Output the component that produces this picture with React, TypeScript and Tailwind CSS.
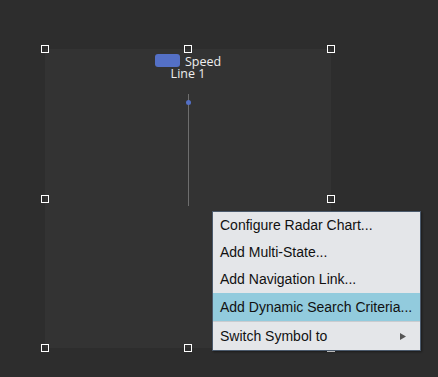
import React from 'react';

const Handle = ({ className }: { className: string }) => (
  <div className={`absolute w-2 h-2 border border-white bg-transparent ${className}`} />
);

const menuItems = [
  { label: 'Configure Radar Chart...', h: 'h-[27px]' },
  { label: 'Add Multi-State...', h: 'h-[27px]' },
  { label: 'Add Navigation Link...', h: 'h-[27px]' },
];

const App: React.FC = () => {
  return (
    <div className="relative w-[438px] h-[377px] bg-[#2d2d2d] overflow-hidden font-['Liberation_Sans',Arial,sans-serif]">
      {/* Widget on canvas */}
      <div className="absolute left-[45px] top-[49px] w-[286px] h-[299px] bg-[#333333]">
        <div className="flex flex-col items-center pt-[5px] font-['Open_Sans','Noto_Sans',sans-serif] text-[12.5px] leading-[12px] text-[#eeeeee]">
          <div className="flex items-center gap-[5px] h-[13px]">
            <div className="w-[25px] h-[13px] rounded-[3px] bg-[#5470c6]" />
            <span className="pt-[2px]">Speed</span>
          </div>
          <span className="pt-[1px]">Line 1</span>
          <div className="relative mt-[14px] w-px h-[112px] bg-[#6e6e6e]">
            <div className="absolute left-[-2px] top-[6px] w-[5px] h-[5px] rounded-full bg-[#5470c6]" />
          </div>
        </div>

        <Handle className="left-[-4px] top-[-4px]" />
        <Handle className="left-[139px] top-[-4px]" />
        <Handle className="left-[282px] top-[-4px]" />
        <Handle className="left-[-4px] top-[146px]" />
        <Handle className="left-[282px] top-[146px]" />
        <Handle className="left-[-4px] top-[295px]" />
        <Handle className="left-[139px] top-[295px]" />
        <Handle className="left-[282px] top-[295px]" />
      </div>

      {/* Context menu */}
      <div className="absolute left-[212px] top-[211px] w-[209px] flex flex-col bg-[#e4e6e9] border border-[#4b5a6c] shadow-[1px_1px_2px_rgba(0,0,0,0.4)] text-[14px] text-[#111111]">
        {menuItems.map((item) => (
          <div key={item.label} className={`${item.h} flex items-center px-[7px]`}>
            {item.label}
          </div>
        ))}
        <div className="h-[28px] flex items-center px-[7px] bg-[#92cbdd]">
          Add Dynamic Search Criteria...
        </div>
        <div className="h-px bg-[#c9ccd0]" />
        <div className="h-[28px] flex items-center justify-between px-[7px]">
          <span>Switch Symbol to</span>
          <svg width="6" height="7" viewBox="0 0 6 7" className="mr-[7px]">
            <polygon points="0,0 6,3.5 0,7" fill="#555555" />
          </svg>
        </div>
      </div>
    </div>
  );
};

export default App;
